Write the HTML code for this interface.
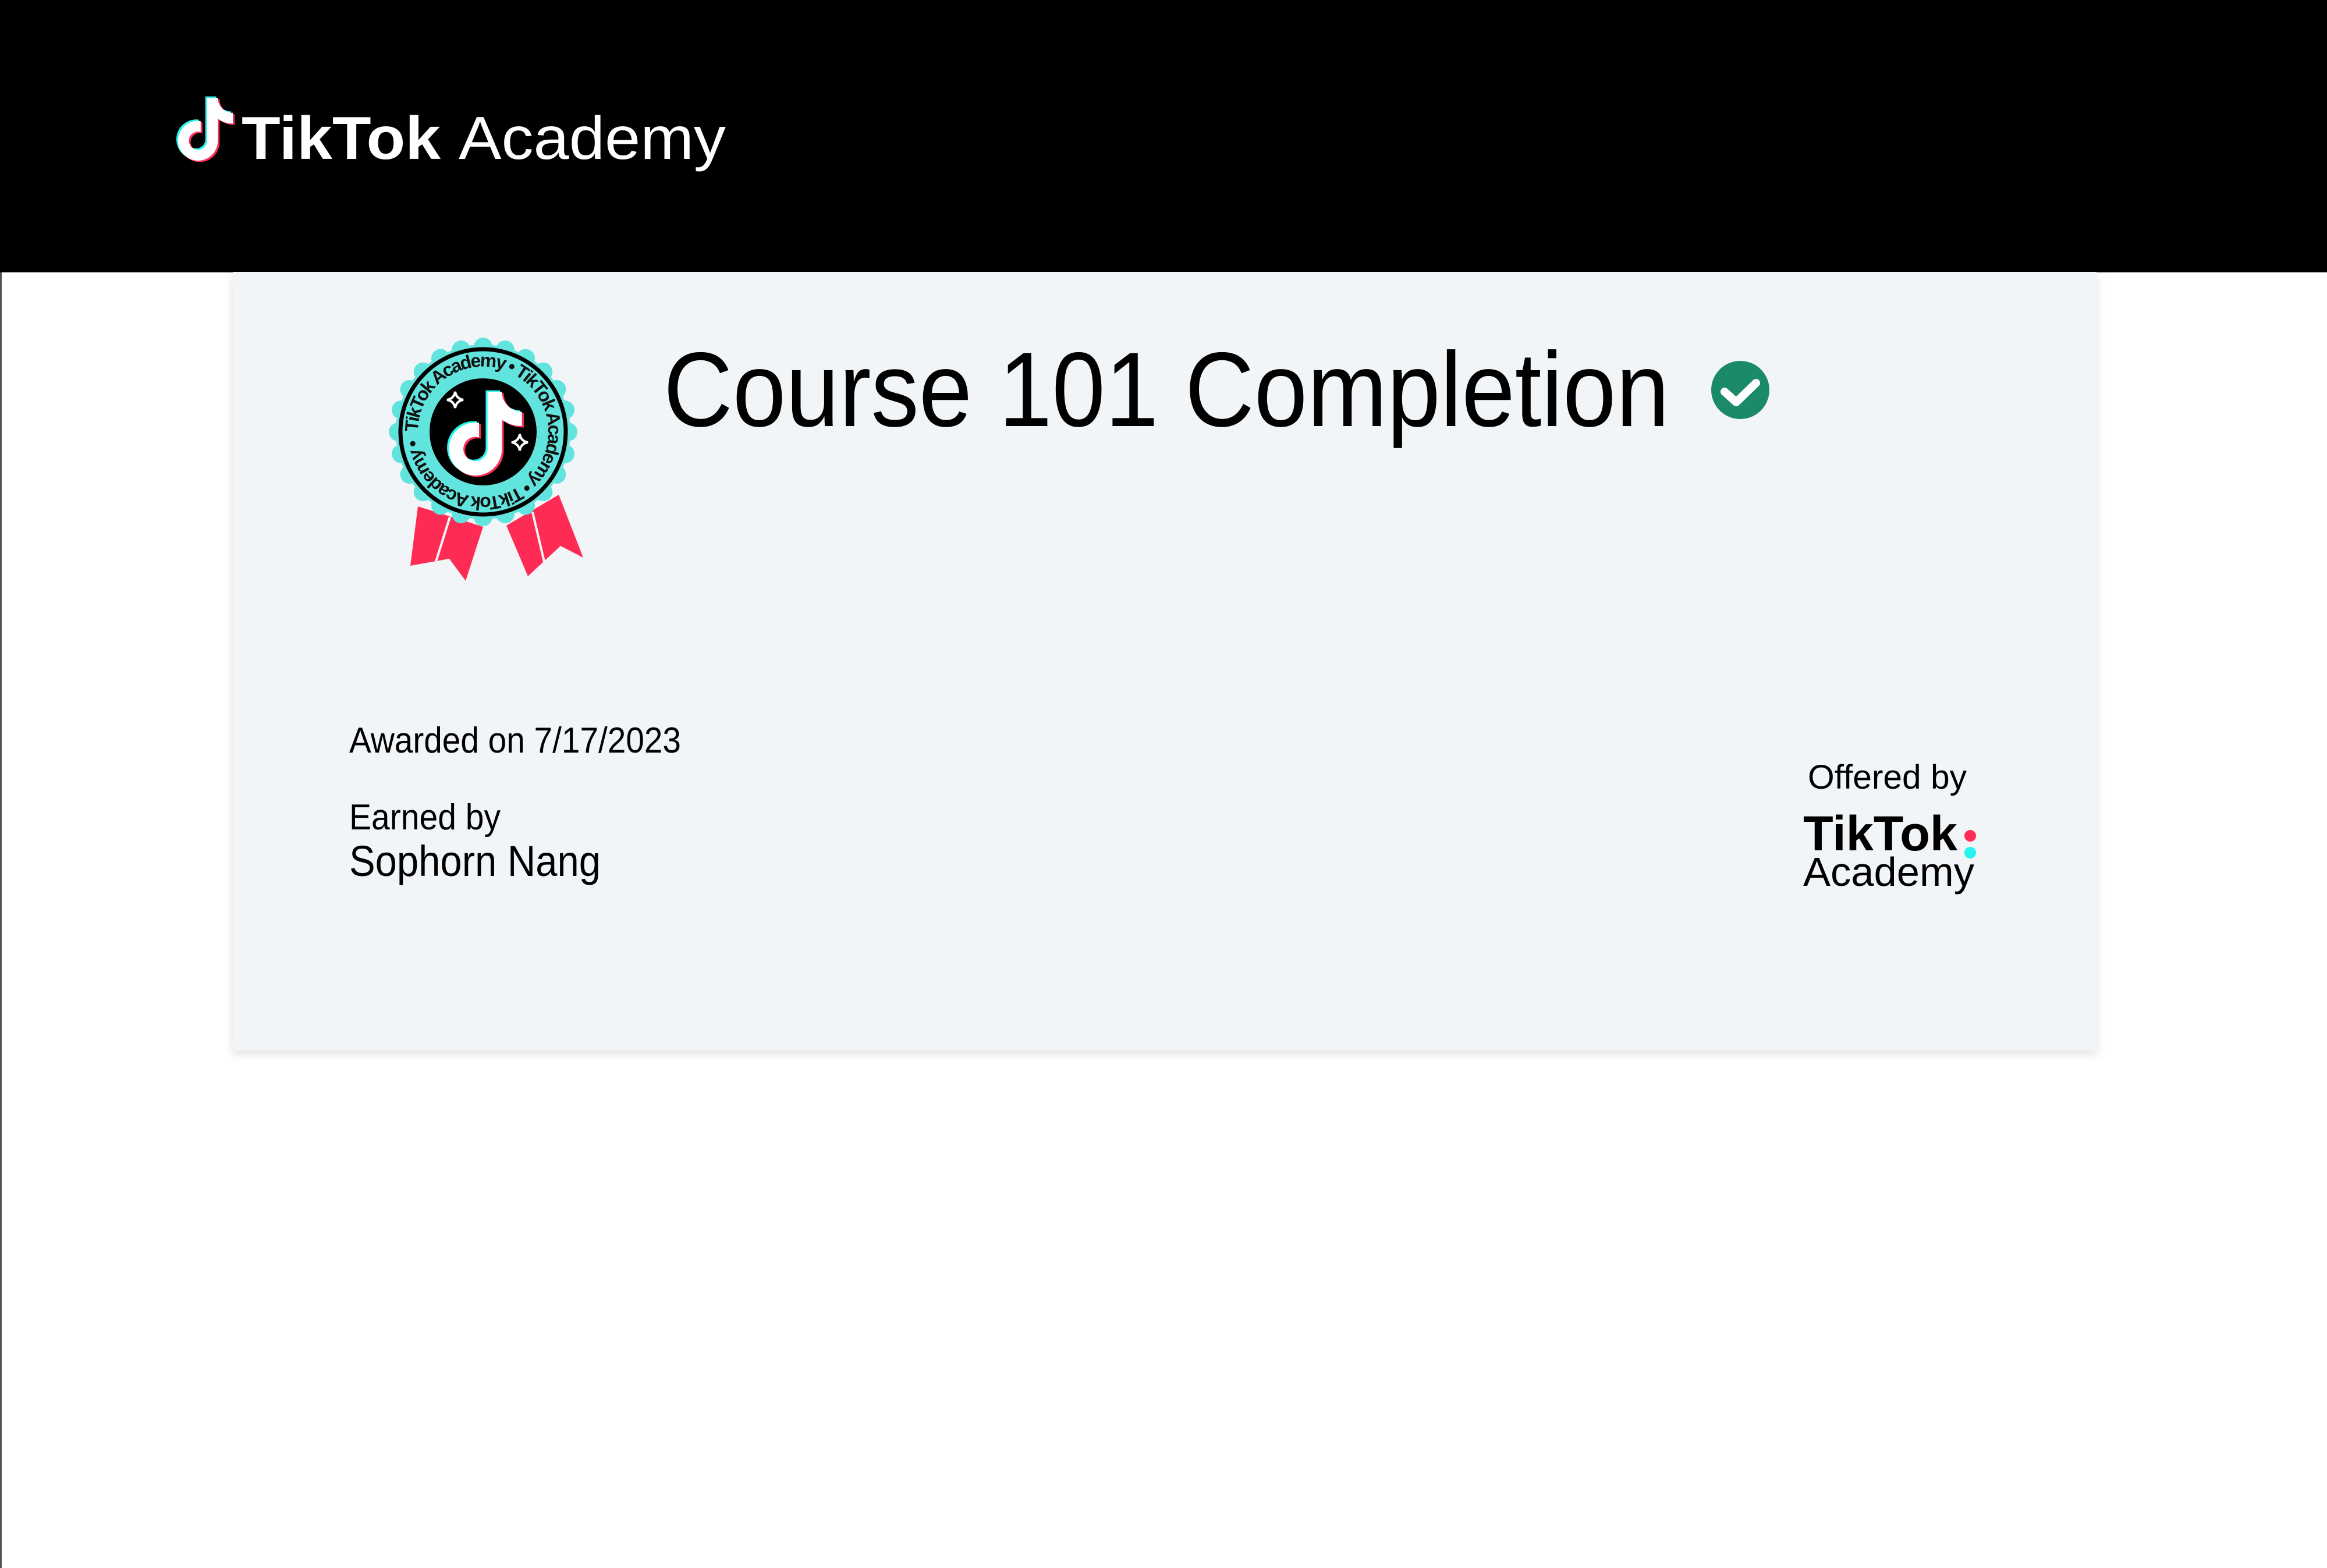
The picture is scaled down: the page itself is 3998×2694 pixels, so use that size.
<!DOCTYPE html>
<html><head><meta charset="utf-8"><style>
html,body{margin:0;padding:0;background:#fff;}
svg{display:block;}
text{font-family:"Liberation Sans",sans-serif;}
</style></head><body>
<svg width="3998" height="2694" viewBox="0 0 3998 2694" xmlns="http://www.w3.org/2000/svg">
<defs>
<filter id="sh" x="-5%" y="-5%" width="110%" height="115%"><feDropShadow dx="0" dy="6" stdDeviation="8" flood-color="#000" flood-opacity="0.12"/></filter>
<path id="note" d="M16.6 5.82s.51.5 0 0A4.278 4.278 0 0 1 15.54 3h-3.09v12.4a2.592 2.592 0 0 1-2.59 2.5c-1.42 0-2.6-1.16-2.6-2.6 0-1.72 1.66-3.01 3.37-2.48V9.66c-3.45-.46-6.470 2.22-6.47 5.64 0 3.330 2.76 5.7 5.69 5.7 3.14 0 5.690-2.55 5.69-5.7V9.01a7.35 7.350 0 0 0 4.3 1.38V7.3s-1.88.09-3.24-1.48z"/>
<path id="ring" d="M718 742 a112 112 0 1 1 224 0 a112 112 0 1 1 -224 0"/>
<path id="sp" d="M0 -14 Q2 -2 14 0 Q2 2 0 14 Q-2 2 -14 0 Q-2 -2 0 -14z"/>
</defs>
<rect width="3998" height="2694" fill="#fff"/>
<rect x="0" y="0" width="3998" height="468" fill="#000"/>
<rect x="0" y="468" width="3" height="2226" fill="#555"/>

<g transform="translate(281,150) scale(6)">
<use href="#note" fill="#25f4ee" transform="translate(-0.5,-0.4)"/>
<use href="#note" fill="#fe2c55" transform="translate(0.5,0.4)"/>
<use href="#note" fill="#fff"/>
</g>
<text x="415" y="273" font-size="104" font-weight="bold" fill="#fff" textLength="342" lengthAdjust="spacingAndGlyphs">TikTok</text>
<text x="788" y="273" font-size="104" fill="#fff" textLength="459" lengthAdjust="spacingAndGlyphs">Academy</text>

<rect x="400" y="467" width="3202" height="1338" fill="#f2f5f8" filter="url(#sh)"/>

<g>
<polygon points="718,870 830,905 800,998 772,960 705,972" fill="#fe2c55"/>
<line x1="773" y1="888" x2="748" y2="968" stroke="#f2f5f8" stroke-width="4"/>
<polygon points="870,903 960,850 1002,958 963,938 907,990" fill="#fe2c55"/>
<line x1="915" y1="880" x2="935" y2="965" stroke="#f2f5f8" stroke-width="4"/>
<circle cx="830" cy="742" r="150" fill="#62e4de"/>
<g transform="translate(830,742)" fill="#62e4de">
<circle cx="0" cy="-146" r="16" id="sc"/>
<use href="#sc" transform="rotate(15)"/><use href="#sc" transform="rotate(30)"/><use href="#sc" transform="rotate(45)"/><use href="#sc" transform="rotate(60)"/><use href="#sc" transform="rotate(75)"/><use href="#sc" transform="rotate(90)"/><use href="#sc" transform="rotate(105)"/><use href="#sc" transform="rotate(120)"/><use href="#sc" transform="rotate(135)"/><use href="#sc" transform="rotate(150)"/><use href="#sc" transform="rotate(165)"/><use href="#sc" transform="rotate(180)"/><use href="#sc" transform="rotate(195)"/><use href="#sc" transform="rotate(210)"/><use href="#sc" transform="rotate(225)"/><use href="#sc" transform="rotate(240)"/><use href="#sc" transform="rotate(255)"/><use href="#sc" transform="rotate(270)"/><use href="#sc" transform="rotate(285)"/><use href="#sc" transform="rotate(300)"/><use href="#sc" transform="rotate(315)"/><use href="#sc" transform="rotate(330)"/><use href="#sc" transform="rotate(345)"/>
</g>
<circle cx="830" cy="742" r="142" fill="none" stroke="#000" stroke-width="7"/>
<circle cx="830" cy="742" r="92" fill="#000"/>
<text font-size="32" font-weight="bold" fill="#111"><textPath href="#ring" textLength="690" lengthAdjust="spacing">TikTok Academy • TikTok Academy • TikTok Academy •</textPath></text>
<g transform="translate(738,649) scale(8)">
<use href="#note" fill="#25f4ee" transform="translate(-0.4,-0.3)"/>
<use href="#note" fill="#fe2c55" transform="translate(0.4,0.3)"/>
<use href="#note" fill="#fff"/>
</g>
<use href="#sp" x="782" y="687" fill="none" stroke="#fff" stroke-width="4"/>
<use href="#sp" x="893" y="760" fill="none" stroke="#fff" stroke-width="4"/>
</g>

<text x="1140" y="732" font-size="182" fill="#000" textLength="1728" lengthAdjust="spacingAndGlyphs">Course 101 Completion</text>
<circle cx="2990" cy="670" r="50" fill="#1a8a6a"/>
<path d="M2963 673 L2983 691 L3017 658" fill="none" stroke="#fff" stroke-width="14" stroke-linecap="round" stroke-linejoin="round"/>

<text x="600" y="1293" font-size="62" fill="#000" textLength="570" lengthAdjust="spacingAndGlyphs">Awarded on 7/17/2023</text>
<text x="600" y="1425" font-size="62" fill="#000" textLength="260" lengthAdjust="spacingAndGlyphs">Earned by</text>
<text x="600" y="1505" font-size="74" fill="#000" textLength="432" lengthAdjust="spacingAndGlyphs">Sophorn Nang</text>

<text x="3106" y="1355" font-size="58" fill="#000" textLength="273" lengthAdjust="spacingAndGlyphs">Offered by</text>
<text x="3098" y="1461" font-size="84" font-weight="bold" fill="#000" textLength="265" lengthAdjust="spacingAndGlyphs">TikTok</text>
<circle cx="3385" cy="1436" r="10" fill="#fe2c55"/>
<circle cx="3385" cy="1465" r="10" fill="#25f4ee"/>
<text x="3098" y="1522" font-size="70" fill="#000" textLength="294" lengthAdjust="spacingAndGlyphs">Academy</text>
</svg>
</body></html>
